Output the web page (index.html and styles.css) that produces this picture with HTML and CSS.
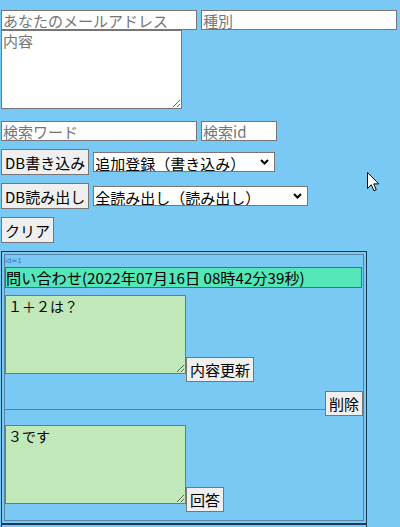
FILE: index.html
```html
<!DOCTYPE html>
<html lang="ja">
<head>
<meta charset="utf-8">
<title>問い合わせ</title>
<link rel="stylesheet" href="styles.css">
</head>
<body>
<main class="form">
  <div class="row">
    <input class="field field-wide" type="text" placeholder="あなたのメールアドレス">
    <input class="field field-wide" type="text" placeholder="種別">
  </div>
  <textarea class="content" placeholder="内容"></textarea>
  <div class="row search">
    <input class="field field-wide" type="text" placeholder="検索ワード">
    <input class="field field-id" type="text" placeholder="検索id">
  </div>
  <div class="row act">
    <button class="btn">DB書き込み</button>
    <span class="sel-wrap">
      <select class="sel sel-write"><option>追加登録（書き込み）</option></select>
      <svg class="chev" width="9" height="6" viewBox="0 0 9 6"><polyline points="1,1 4.5,4.5 8,1" fill="none" stroke="#000" stroke-width="2"/></svg>
    </span>
  </div>
  <div class="row act">
    <button class="btn">DB読み出し</button>
    <span class="sel-wrap">
      <select class="sel sel-read"><option>全読み出し（読み出し）</option></select>
      <svg class="chev" width="9" height="6" viewBox="0 0 9 6"><polyline points="1,1 4.5,4.5 8,1" fill="none" stroke="#000" stroke-width="2"/></svg>
    </span>
  </div>
  <div class="row act">
    <button class="btn">クリア</button>
  </div>

  <section class="record">
    <div class="record-inner">
      <div class="rid">id=1</div>
      <div class="head">問い合わせ(2022年07月16日 08時42分39秒)</div>
      <div class="qa">
        <textarea class="note">１＋２は？</textarea>
        <button class="btn btn-small">内容更新</button>
      </div>
      <div class="del-row">
        <div class="rule"></div>
        <button class="btn btn-small">削除</button>
      </div>
      <div class="qa answer">
        <textarea class="note">３です</textarea>
        <button class="btn btn-small">回答</button>
      </div>
    </div>
  </section>
  <section class="record record-next">
    <div class="record-inner record-empty"></div>
  </section>
</main>
<svg class="cursor" width="13" height="20" viewBox="0 0 13 20"><path d="M0.5 0.5 L0.5 16.5 L4.3 12.8 L7 18.8 L9.3 17.8 L6.7 11.9 L11.8 11.9 Z" fill="#fff" stroke="#000" stroke-width="1" stroke-linejoin="miter"/></svg>
</body>
</html>
```
FILE: styles.css
```css
* { box-sizing: border-box; }
html, body { margin: 0; }
body {
  background: #79c9f4;
  padding: 10px 0 0 1px;
  font-family: "Noto Sans CJK JP", "Noto Sans", sans-serif;
  font-size: 15px;
  color: #000;
  position: relative;
  min-height: 527px;
}
.row { display: flex; align-items: center; gap: 4px; }
.field {
  font-family: "Noto Sans CJK JP", "Noto Sans", sans-serif;
  font-size: 15px;
  height: 20px;
  margin: 0;
  padding: 0 1px;
  border: 1px solid #767676;
  border-radius: 0;
  background: #fff;
  color: #000;
}
.field::placeholder, .content::placeholder { color: #757575; }
.field-wide { width: 196px; }
.field-id { width: 76px; }
.content {
  display: block;
  width: 181px;
  height: 79px;
  margin: 0;
  padding: 1px;
  border: 1px solid #767676;
  border-radius: 0;
  background: #fff;
  font-family: "Noto Sans CJK JP", "Noto Sans", sans-serif;
  font-size: 15px;
  line-height: 1.2;
}
.search { margin-top: 12px; }
.act { margin-top: 8px; }
.btn {
  font-family: "Noto Sans CJK JP", "Noto Sans", sans-serif;
  font-size: 15px;
  height: 26px;
  margin: 0;
  padding: 0 3px;
  border: 1px solid #767676;
  border-radius: 0;
  background: #efefef;
  color: #000;
  white-space: nowrap;
}
.btn-small { height: 25px; }
.sel-wrap { position: relative; display: inline-flex; }
.sel {
  appearance: none;
  -webkit-appearance: none;
  font-family: "Noto Sans CJK JP", "Noto Sans", sans-serif;
  font-size: 15px;
  height: 20px;
  margin: 0;
  padding: 0 0 0 1px;
  border: 1px solid #767676;
  border-radius: 0;
  background: #fff;
  color: #000;
}
.sel-write { width: 182px; }
.sel-read { width: 215px; }
.chev { position: absolute; right: 6px; top: 7px; pointer-events: none; }

.record {
  margin-top: 8px;
  width: 366px;
  border: 1px solid #1b3a52;
  padding: 2px;
}
.record-next { margin-top: 0; }
.record-inner {
  border: 1px solid #5a86a3;
  padding: 0 0 8px 0;
}
.record-empty { min-height: 40px; }
.rid {
  height: 12px;
  font-family: "DejaVu Sans", sans-serif;
  font-size: 7px;
  line-height: 12px;
  color: #3d72aa;
}
.head {
  width: 357px;
  height: 21px;
  background: #55e6b9;
  border: 1px solid #4b6b80;
  font-size: 15.2px;
  line-height: 19px;
  white-space: nowrap;
  overflow: hidden;
}
.qa { display: flex; align-items: flex-start; margin-top: 7px; }
.note {
  width: 181px;
  height: 79px;
  margin: 0;
  padding: 2px;
  border: 1px solid #767676;
  border-radius: 0;
  background: #c0e8b8;
  font-family: "Noto Sans CJK JP", sans-serif;
  font-size: 14px;
  line-height: 1.2;
  color: #000;
}
.qa .btn { margin-top: 62px; }
.del-row { display: flex; align-items: flex-end; margin-top: 9px; }
.rule { flex: 1; border-top: 1px solid #4f86ab; margin-bottom: 6px; }
.answer { margin-top: 9px; }
.cursor { position: absolute; left: 367px; top: 172px; }
```
